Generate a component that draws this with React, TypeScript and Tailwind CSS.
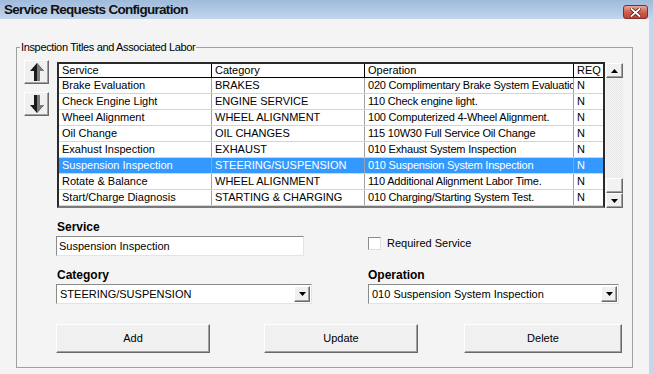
import { ReactNode } from "react";

interface Row {
  service: string;
  category: string;
  operation: string;
  req: string;
}

const rows: Row[] = [
  { service: "Brake Evaluation", category: "BRAKES", operation: "020 Complimentary Brake System Evaluation", req: "N" },
  { service: "Check Engine Light", category: "ENGINE SERVICE", operation: "110 Check engine light.", req: "N" },
  { service: "Wheel Alignment", category: "WHEEL ALIGNMENT", operation: "100 Computerized 4-Wheel Alignment.", req: "N" },
  { service: "Oil Change", category: "OIL CHANGES", operation: "115 10W30 Full Service Oil Change", req: "N" },
  { service: "Exahust Inspection", category: "EXHAUST", operation: "010 Exhaust System Inspection", req: "N" },
  { service: "Suspension Inspection", category: "STEERING/SUSPENSION", operation: "010 Suspension System Inspection", req: "N" },
  { service: "Rotate & Balance", category: "WHEEL ALIGNMENT", operation: "110 Additional Alignment Labor Time.", req: "N" },
  { service: "Start/Charge Diagnosis", category: "STARTING & CHARGING", operation: "010 Charging/Starting System Test.", req: "N" },
];

const SELECTED = 5;

// classic raised 3d edge
const raised =
  "border border-t-white border-l-white border-b-[#696969] border-r-[#696969] shadow-[inset_-1px_-1px_0_#a0a0a0]";

const Triangle = ({ up }: { up?: boolean }) => (
  <svg width="7" height="4" viewBox="0 0 7 4">
    <polygon points={up ? "3.5,0 7,4 0,4" : "0,0 7,0 3.5,4"} fill="#000" />
  </svg>
);

const MoveArrow = ({ up }: { up?: boolean }) => (
  <svg width="14" height="18" viewBox="0 0 14 18">
    {up ? (
      <>
        <polygon points="7,0 14,8 10,8 10,18 4,18 4,8 0,8" fill="#1a1a1a" />
        <polygon points="7,0 14,8 10,8 10,18 7,18" fill="#7a7a7a" />
      </>
    ) : (
      <>
        <polygon points="4,0 10,0 10,10 14,10 7,18 0,10 4,10" fill="#1a1a1a" />
        <polygon points="7,0 10,0 10,10 14,10 7,18" fill="#7a7a7a" />
      </>
    )}
  </svg>
);

const ClassicButton = ({ children, className }: { children: ReactNode; className: string }) => (
  <button className={`${raised} bg-[#f0f0f0] flex items-center justify-center text-[11px] text-black ${className}`}>
    {children}
  </button>
);

const ComboBox = ({ value, width }: { value: string; width: string }) => (
  <div
    className={`${width} h-[20px] flex items-center bg-white border border-t-[#8a8a8a] border-l-[#8a8a8a] border-b-[#e4e4e4] border-r-[#e4e4e4] pl-[3px] pr-[1px]`}
  >
    <span className="flex-1 text-[11px] leading-none truncate">{value}</span>
    <div className={`${raised} bg-[#f0f0f0] w-[16px] h-[16px] flex items-center justify-center`}>
      <Triangle />
    </div>
  </div>
);

export default function App() {
  return (
    <div
      className="w-[653px] h-[374px] bg-[#f4f4f4] flex flex-col overflow-hidden text-black"
      style={{ fontFamily: '"Liberation Sans", Arial, sans-serif' }}
    >
      {/* title bar */}
      <div className="h-[19px] shrink-0 flex items-center justify-between bg-gradient-to-b from-[#9fbadb] to-[#c2d6ec] pl-[4px] pr-[5px]">
        <span className="text-[13.5px] font-bold leading-none tracking-[-0.7px] text-[#111]">
          Service Requests Configuration
        </span>
        <div className="w-[25px] h-[14px] mt-[5px] rounded-[3px] border border-[#8b2a20] bg-gradient-to-b from-[#e5a79b] via-[#cf5f50] to-[#c04232] flex items-center justify-center">
          <svg width="11" height="9" viewBox="0 0 11 9">
            <path d="M1.5 1 L9.5 8 M9.5 1 L1.5 8" stroke="#5a1a14" strokeWidth="3.4" strokeLinecap="square" />
            <path d="M1.5 1 L9.5 8 M9.5 1 L1.5 8" stroke="#ffffff" strokeWidth="1.8" strokeLinecap="square" />
          </svg>
        </div>
      </div>

      <div className="flex flex-1">
        <div className="flex-1 pt-[28px] pl-[16px]">
          {/* group box */}
          <div className="relative w-[617px] h-[321px] border border-[#a0a0a0]">
            <span className="absolute -top-[8px] left-[3px] bg-[#f4f4f4] px-[1px] text-[11px] leading-[14px] tracking-[-0.35px]">
              Inspection Titles and Associated Labor
            </span>

            <div className="flex items-start mt-[12px] ml-[7px]">
              <div className="flex flex-col gap-[8px]">
                <ClassicButton className="w-[25px] h-[24px]">
                  <MoveArrow up />
                </ClassicButton>
                <ClassicButton className="w-[25px] h-[24px]">
                  <MoveArrow />
                </ClassicButton>
              </div>

              {/* list view */}
              <div className="ml-[8px] mt-[2px] w-[548px] h-[146px] bg-white border-2 border-[#2a2a2a] border-b-[#7a7a7a] text-[11px] leading-none overflow-hidden">
                <div className="flex h-[14px] border-b border-black">
                  <div className="w-[153px] border-r border-black pl-[3px] flex items-center">Service</div>
                  <div className="w-[153px] border-r border-black pl-[3px] flex items-center">Category</div>
                  <div className="w-[209px] border-r border-black pl-[3px] flex items-center">Operation</div>
                  <div className="w-[29px] pl-[3px] flex items-center">REQ</div>
                </div>
                {rows.map((r, i) => {
                  const sel = i === SELECTED;
                  return (
                    <div
                      key={r.service}
                      className={`flex h-[16px] border-b border-[#d4d4d4] ${sel ? "bg-[#3399ff] text-white" : ""}`}
                    >
                      <div className="w-[153px] border-r border-[#a0a0a0] pl-[3px] flex items-center whitespace-nowrap overflow-hidden">
                        {r.service}
                      </div>
                      <div className="w-[153px] border-r border-[#a0a0a0] pl-[3px] flex items-center whitespace-nowrap overflow-hidden">
                        {r.category}
                      </div>
                      <div className="w-[209px] border-r border-[#a0a0a0] pl-[3px] flex items-center whitespace-nowrap overflow-hidden tracking-[-0.2px]">
                        {r.operation}
                      </div>
                      <div className="w-[29px] pl-[3px] flex items-center">{r.req}</div>
                    </div>
                  );
                })}
              </div>

              {/* scrollbar */}
              <div className="ml-[1px] mt-[3px] w-[17px] h-[145px] flex flex-col bg-[#ededed]">
                <div className={`${raised} bg-[#f0f0f0] h-[15px] flex items-center justify-center`}>
                  <Triangle up />
                </div>
                <div className="flex-1 bg-[repeating-conic-gradient(#f6f6f6_0%_25%,#e6e6e6_0%_50%)] bg-[length:2px_2px]" />
                <div className={`${raised} bg-[#f2f2f2] h-[15px]`} />
                <div className={`${raised} bg-[#f0f0f0] h-[15px] flex items-center justify-center`}>
                  <Triangle />
                </div>
              </div>
            </div>

            {/* form */}
            <div className="pl-[39px] mt-[12px]">
              <div className="flex">
                <div className="w-[312px]">
                  <div className="text-[12px] font-bold leading-[14px] pl-[1px]">Service</div>
                  <div className="mt-[2px] w-[248px] h-[20px] bg-white border border-t-[#8a8a8a] border-l-[#8a8a8a] border-b-[#e4e4e4] border-r-[#e4e4e4] pl-[2px] flex items-center text-[11px] leading-none">
                    Suspension Inspection
                  </div>
                </div>
                <label className="pt-[17px] flex items-start gap-[6px] text-[11px] leading-[13px]">
                  <span className="w-[13px] h-[13px] bg-white border border-t-[#8a8a8a] border-l-[#8a8a8a] border-b-[#dedede] border-r-[#dedede]" />
                  Required Service
                </label>
              </div>

              <div className="flex mt-[12px]">
                <div className="w-[312px]">
                  <div className="text-[12px] font-bold leading-[14px] pl-[1px]">Category</div>
                  <div className="mt-[2px]">
                    <ComboBox value="STEERING/SUSPENSION" width="w-[256px]" />
                  </div>
                </div>
                <div>
                  <div className="text-[12px] font-bold leading-[14px]">Operation</div>
                  <div className="mt-[2px]">
                    <ComboBox value="010 Suspension System Inspection" width="w-[251px]" />
                  </div>
                </div>
              </div>

              <div className="flex mt-[20px]">
                <ClassicButton className="w-[154px] h-[29px]">Add</ClassicButton>
                <ClassicButton className="ml-[54px] w-[154px] h-[29px]">Update</ClassicButton>
                <ClassicButton className="ml-[46px] w-[158px] h-[29px]">Delete</ClassicButton>
              </div>
            </div>
          </div>
        </div>
        <div className="w-[4px] bg-[#c4d7ed]" />
      </div>
    </div>
  );
}
